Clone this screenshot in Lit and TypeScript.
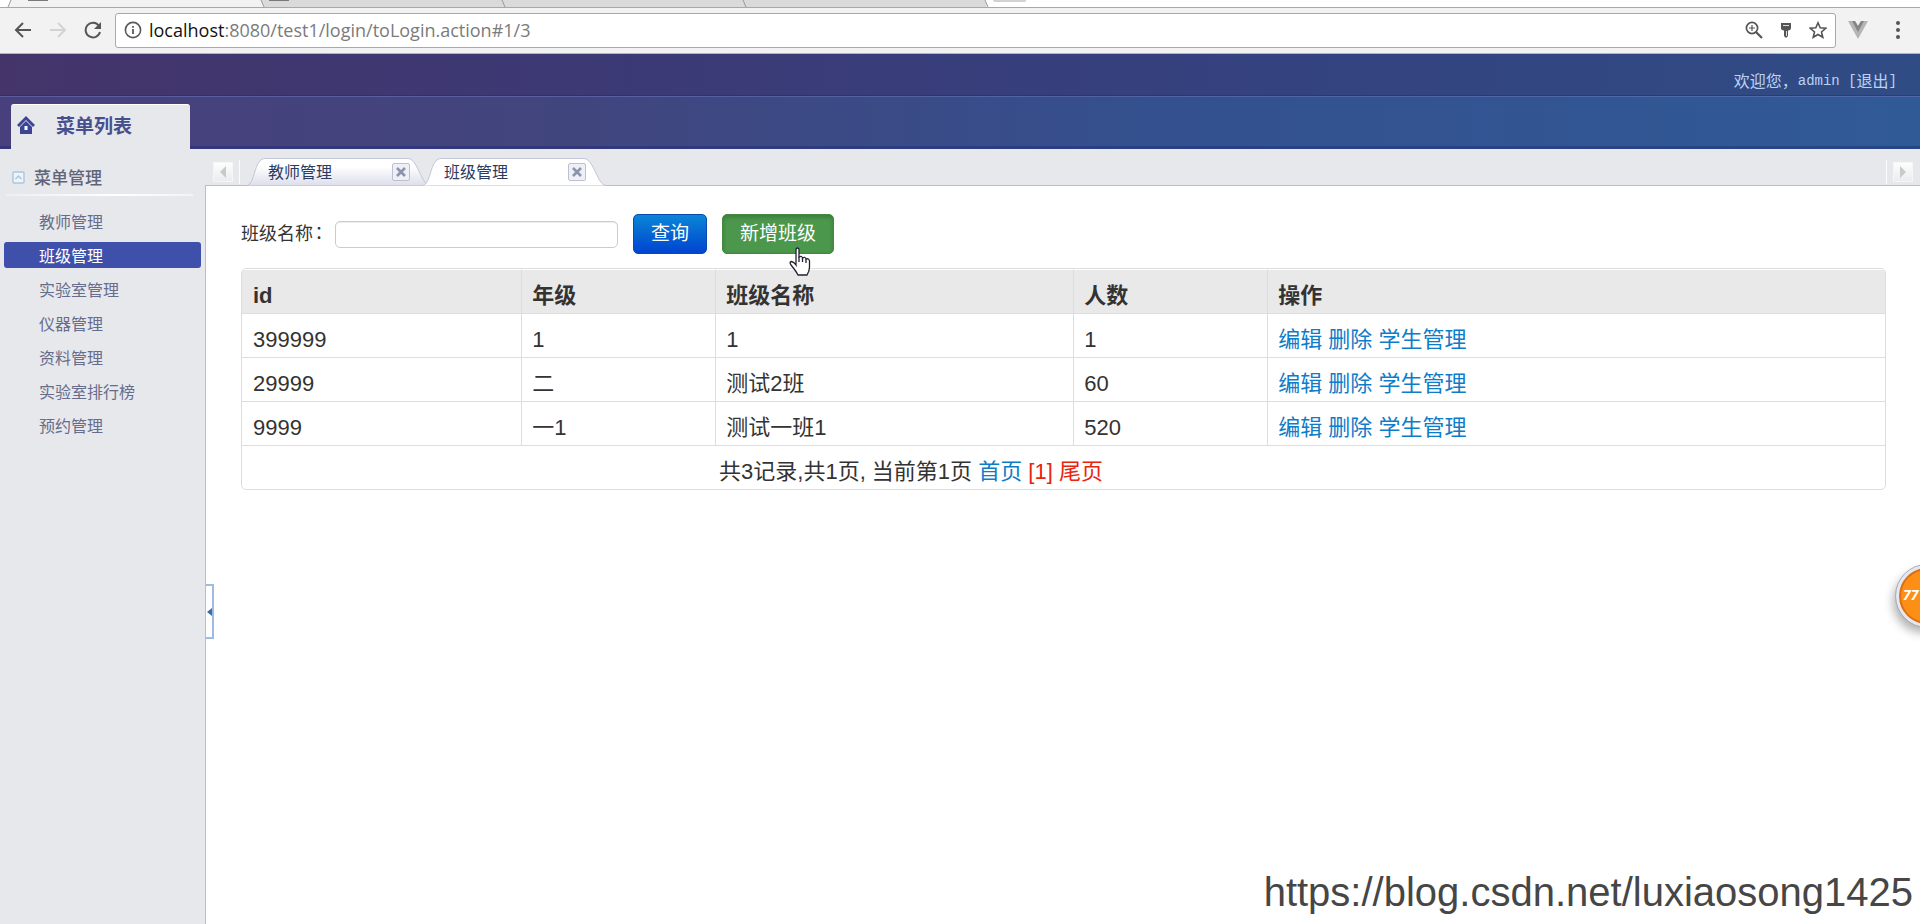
import { LitElement, html, css } from "lit";
import { customElement, state } from "lit/decorators.js";

interface ClassRow {
  id: string;
  grade: string;
  name: string;
  count: string;
}

const MENU = ["教师管理", "班级管理", "实验室管理", "仪器管理", "资料管理", "实验室排行榜", "预约管理"];
const TABS = ["教师管理", "班级管理"];
const ROWS: ClassRow[] = [
  { id: "399999", grade: "1", name: "1", count: "1" },
  { id: "29999", grade: "二", name: "测试2班", count: "60" },
  { id: "9999", grade: "一1", name: "测试一班1", count: "520" },
];

@customElement("browser-bar")
export class BrowserBar extends LitElement {
  static styles = css`
    :host { display: block; background: #f2f2f2; }
    .strip { display: block; width: 100%; height: 8px; background: #fff; border-bottom: 1px solid #a8a8a8; box-sizing: border-box; overflow: hidden; }
    .strip svg { display: block; }
    .bar { display: flex; align-items: center; height: 46px; padding: 0 20px 1px 14px; box-sizing: border-box; border-bottom: 1px solid #b5b5b7; }
    .nav { border: 0; background: none; padding: 0; width: 18px; height: 20px; margin-right: 17px; display: flex; align-items: center; justify-content: center; flex: none; }
    .address { flex: 1; height: 35px; box-sizing: border-box; background: #fff; border: 1px solid #a9a9ac; border-radius: 3px; display: flex; align-items: center; padding: 0 8px; min-width: 0; margin-left: -4px; }
    .url { flex: 1; margin-left: 7px; font: 18px/24px "Open Sans", "Noto Sans", sans-serif; color: #7b7b7b; white-space: nowrap; }
    .host { color: #111; }
    .tools { display: flex; gap: 14px; align-items: center; }
    .ext { display: flex; align-items: center; gap: 28px; margin-left: 12px; }
    svg { display: block; }
  `;
  render() {
    return html`
      <div class="strip">
        <svg width="1100" height="7" viewBox="0 0 1100 7">
          <path d="M11 0L8 7H264L261 0Z" fill="#f2f2f2" />
          <path d="M261 0L264 7H987L985 0Z" fill="#dadada" />
          <path d="M11 0L8 7M261 0L264 7M502 0L505 7M743 0L746 7M985 0L988 7" stroke="#999" fill="none" />
          <path d="M28 0H48M269 0H289" stroke="#77777c" stroke-width="2" />
          <path d="M993 0H1026V1Q1026 2 1024 2H995Q993 2 993 0Z" fill="#d2d2d2" />
        </svg>
      </div>
      <div class="bar">
        <button class="nav" aria-label="Back"><svg width="18" height="18" viewBox="0 0 18 18" fill="none" stroke="#555" stroke-width="2"><path d="M17 9H2M9 2L2 9L9 16" /></svg></button>
        <button class="nav" aria-label="Forward"><svg width="18" height="18" viewBox="0 0 18 18" fill="none" stroke="#d3d3d3" stroke-width="2"><path d="M1 9H16M9 2L16 9L9 16" /></svg></button>
        <button class="nav" aria-label="Reload"><svg width="18" height="18" viewBox="0 0 18 18" fill="none" stroke="#555" stroke-width="2"><path d="M15 5A7.3 7.3 0 1 0 16 11" /><path d="M17 1V8H10Z" fill="#555" stroke="none" /></svg></button>
        <div class="address">
          <svg width="18" height="18" viewBox="0 0 18 18"><circle cx="9" cy="9" r="7.6" fill="none" stroke="#5a5a5a" stroke-width="1.6" /><path d="M9 8V13M9 5V6.8" stroke="#5a5a5a" stroke-width="1.8" /></svg>
          <span class="url"><span class="host">localhost</span>:8080/test1/login/toLogin.action#1/3</span>
          <span class="tools">
            <svg width="18" height="18" viewBox="0 0 18 18" fill="none" stroke="#555"><circle cx="7" cy="7" r="5.6" stroke-width="1.7" /><path d="M11 11L17 17" stroke-width="2.2" /><path d="M4 7H10M7 4V10" stroke-width="1.2" /></svg>
            <svg width="18" height="18" viewBox="0 0 18 18"><path d="M4 2H14V7Q14 9 11 9.500V15L9 17L7 15V9.500Q4 9 4 7Z" fill="#555" /><path d="M6 4.500H12M9.500 10V15" stroke="#ddd" /></svg>
            <svg width="18" height="18" viewBox="0 0 18 18"><path d="M9 1.800L11.200 6.800L16.700 7.300L12.500 11L13.800 16.300L9 13.500L4.200 16.300L5.500 11L1.300 7.300L6.800 6.800Z" fill="none" stroke="#555" stroke-width="1.6" /></svg>
          </span>
        </div>
        <span class="ext">
          <svg width="20" height="18" viewBox="0 0 20 18"><path d="M0 0H7L10 5L13 0H20L10 18Z" fill="#b5b5b5" /><path d="M4 0H7L10 5L13 0H16L10 11Z" fill="#858585" /></svg>
          <svg width="4" height="18" viewBox="0 0 4 18" fill="#555"><circle cx="2" cy="2" r="2" /><circle cx="2" cy="9" r="2" /><circle cx="2" cy="16" r="2" /></svg>
        </span>
      </div>
    `;
  }
}

@customElement("side-menu")
export class SideMenu extends LitElement {
  @state() private active = 1;
  static styles = css`
    :host { display: block; width: 205px; flex: none; background: #e7e8ec; font-family: "Noto Sans CJK SC", sans-serif; }
    .group { display: flex; align-items: center; gap: 9px; height: 32px; margin: 12px 12px 0; font-size: 17px; line-height: 24px; color: #5f6478; font-weight: 500; }
    .rule { height: 2px; margin: 1px 12px 0 6px; background: linear-gradient(90deg, #eeeff3, #fff 60%, #f2f3f6); }
    .list { list-style: none; margin: 12px 4px 0; padding: 0; display: flex; flex-direction: column; gap: 8px; }
    .item { display: block; box-sizing: border-box; height: 26px; padding-left: 35px; font-size: 16px; line-height: 26px; color: #666c8a; text-decoration: none; border-radius: 3px; }
    .item.on { background: #3f50ab; color: #fff; }
  `;
  render() {
    return html`
      <div class="group">
        <svg width="13" height="13" viewBox="0 0 13 13" fill="none"><rect x="1" y="1" width="11" height="11" rx="1" fill="#eef4fa" stroke="#a9c6df" stroke-width="1.4" /><path d="M3.500 8L6.500 5L9.500 8" stroke="#a9c6df" stroke-width="1.500" /></svg>
        <span>菜单管理</span>
      </div>
      <div class="rule"></div>
      <ul class="list">
        ${MENU.map((m, i) => html`<li><a class="item ${i === this.active ? "on" : ""}" href="#" @click=${(e: Event) => { e.preventDefault(); this.active = i; }}>${m}</a></li>`)}
      </ul>
    `;
  }
}

@customElement("tab-strip")
export class TabStrip extends LitElement {
  @state() private active = 1;
  static styles = css`
    :host { display: flex; height: 37px; box-sizing: border-box; padding: 0 8px 0 9px; background: #e7e8ec; border-bottom: 1px solid #b9bccb; font-family: "Noto Sans CJK SC", sans-serif; }
    .scroll { border: 0; padding: 0; width: 18px; height: 18px; margin-top: 14px; background: linear-gradient(#fdfdfd, #ececee); box-shadow: 0 0 0 1px #f6f6f6; display: flex; align-items: center; justify-content: center; }
    .sep { width: 1px; margin: 11px 7px 1px; background: #fbfbfc; }
    .tabs { flex: 1; display: flex; align-items: flex-end; margin-bottom: -1px; }
    .tab { display: grid; width: 183px; height: 28px; margin-right: -7px; }
    .tab > * { grid-area: 1 / 1; }
    .face { display: flex; align-items: center; padding: 0 20px 0 21px; z-index: 1; }
    .name { flex: 1; border: 0; background: none; padding: 0 0 2px; text-align: left; font: 16px/24px "Noto Sans CJK SC", sans-serif; color: #2b3a63; }
    .x { border: 1px solid #bcc0d2; background: #eff0f5; border-radius: 2px; width: 18px; height: 18px; padding: 0; display: flex; align-items: center; justify-content: center; flex: none; }
  `;
  render() {
    const arrow = (d: string) => html`<svg width="8" height="12" viewBox="0 0 8 12"><path d=${d} fill="#c9c9cc" /></svg>`;
    return html`
      <button class="scroll" aria-label="Scroll left">${arrow("M7 0V12L1 6Z")}</button>
      <span class="sep"></span>
      <div class="tabs">
        ${TABS.map(
          (t, i) => html`<div class="tab">
            <svg width="183" height="28" viewBox="0 0 183 28">
              <defs><linearGradient id="g" x2="0" y2="1"><stop offset="0.3" stop-color="#fff" /><stop offset="1" stop-color="#dcdeea" /></linearGradient></defs>
              <path d="M0 27.500C8 26 7 2 17 0.500H161C171 1 174 27 183 27.500" fill=${i === this.active ? "#fff" : "url(#g)"} stroke="#c3c6d6" />
            </svg>
            <div class="face">
              <button class="name" @click=${() => (this.active = i)}>${t}</button>
              <button class="x" aria-label="Close"><svg width="10" height="10" viewBox="0 0 10 10"><path d="M1 1L9 9M9 1L1 9" stroke="#8c93ad" stroke-width="2.600" /></svg></button>
            </div>
          </div>`
        )}
      </div>
      <span class="sep"></span>
      <button class="scroll" aria-label="Scroll right">${arrow("M1 0V12L7 6Z")}</button>
    `;
  }
}

@customElement("class-panel")
export class ClassPanel extends LitElement {
  static styles = css`
    :host { display: block; padding: 28px 34px 0 35px; font-family: "Liberation Sans", "Noto Sans CJK SC", sans-serif; color: #333; }
    .form { display: flex; align-items: center; height: 40px; }
    .label { font-size: 18px; line-height: 24px; width: 94px; white-space: nowrap; margin-top: -2px; }
    .colon { font-family: "Noto Sans CJK TC", sans-serif; margin-left: -3px; }
    .text { width: 283px; height: 27px; box-sizing: border-box; border: 1px solid #ccc; border-radius: 5px; padding: 0 6px; font: 18px/24px "Liberation Sans", sans-serif; box-shadow: inset 0 1px 1px rgba(0, 0, 0, 0.075); outline: 0; }
    .btn { height: 40px; box-sizing: border-box; padding: 0 17px; border-radius: 5px; font: 19px/24px "Liberation Sans", "Noto Sans CJK SC", sans-serif; color: #fff; margin-left: 15px; }
    .search { border: 1px solid #0a4aae; background: linear-gradient(#0a86d6, #0044d0); }
    .add { border: 1px solid #43893f; background: #4b974b; box-shadow: inset 0 2px 4px rgba(0, 0, 0, 0.2); }
    .grid { width: 100%; margin-top: 14px; border: 1px solid #ddd; border-radius: 5px; border-spacing: 0; table-layout: fixed; font-size: 22px; line-height: 27px; overflow: hidden; }
    .grid th, .grid td { text-align: left; height: 44px; box-sizing: border-box; padding: 12px 10px 4px; border-top: 1px solid #ddd; border-left: 1px solid #ddd; white-space: nowrap; }
    .grid th { border-top-color: #fff; background: #e9e9e9; background-clip: padding-box; font-weight: 700; }
    .grid th:first-child, .grid td:first-child { border-left: 0; padding-left: 11px; }
    .c1 { width: 17%; } .c2 { width: 11.8%; } .c3 { width: 21.8%; } .c4 { width: 11.8%; }
    .link { color: #0e7cc8; text-decoration: none; }
    .red { color: #e8240f; text-decoration: none; }
    .grid td.pager { text-align: center; padding-right: 316px; }
  `;
  render() {
    return html`
      <form class="form" @submit=${(e: Event) => e.preventDefault()}>
        <label class="label" for="q">班级名称<span class="colon">：</span></label>
        <input class="text" id="q" type="text" />
        <button class="btn search">查询</button>
        <button class="btn add" type="button">新增班级</button>
      </form>
      <table class="grid">
        <colgroup><col class="c1" /><col class="c2" /><col class="c3" /><col class="c4" /><col /></colgroup>
        <thead><tr><th>id</th><th>年级</th><th>班级名称</th><th>人数</th><th>操作</th></tr></thead>
        <tbody>
          ${ROWS.map(
            (r) => html`<tr><td>${r.id}</td><td>${r.grade}</td><td>${r.name}</td><td>${r.count}</td>
              <td><a class="link" href="#">编辑</a> <a class="link" href="#">删除</a> <a class="link" href="#">学生管理</a></td></tr>`
          )}
          <tr><td class="pager" colspan="5">共3记录,共1页, 当前第1页 <a class="link" href="#">首页</a> <a class="red" href="#">[1]</a> <a class="red" href="#">尾页</a></td></tr>
        </tbody>
      </table>
    `;
  }
}

@customElement("app-root")
export class AppRoot extends LitElement {
  static styles = css`
    :host { display: flex; flex-direction: column; min-height: 100vh; position: relative; overflow: hidden; background: #fff; font-family: "Noto Sans CJK SC", sans-serif; }
    .head { background: linear-gradient(90deg, #44346a, #3b3a76 35%, #34427f 65%, #304c85); }
    .user { display: flex; justify-content: flex-end; align-items: center; height: 42px; padding: 10px 23px 0 0; box-sizing: border-box; font-size: 16px; line-height: 24px; color: #b9d3f5; }
    .mono { font-family: "Liberation Mono", monospace; font-size: 14px; white-space: pre; padding-top: 2px; }
    .out { color: inherit; text-decoration: none; }
    .nav { border-top: 1px solid rgba(110, 120, 190, 0.5); box-shadow: 0 -1px 0 rgba(30, 30, 80, 0.3), inset 0 -3px 0 rgba(24, 40, 120, 0.4); height: 53px; box-sizing: border-box; padding: 7px 11px 0; background: linear-gradient(90deg, #48407c, #41457e 30%, #34508e 60%, #305a96); display: flex; }
    .home { width: 179px; box-sizing: border-box; background: #e7e8ec; border-radius: 3px 3px 0 0; border-top: 1px solid #fff; display: flex; align-items: center; gap: 21px; padding: 0 6px; font: 700 19px/24px "Liberation Serif", "Noto Sans CJK SC", serif; color: #46508f; z-index: 1; }
    .house { margin-bottom: 4px; }
    .body { flex: 1; display: flex; }
    .main { flex: 1; min-width: 0; }
    .page { border-left: 1px solid #b9bccb; position: relative; min-height: calc(100vh - 186px); }
    .split { position: absolute; left: 0; top: 398px; width: 8px; height: 55px; box-sizing: border-box; padding: 0; border: 2px solid #9dbce0; border-left: 0; background: #fff; display: flex; align-items: center; justify-content: center; }
    .ball { position: absolute; right: -38px; top: 565px; width: 62px; height: 62px; box-sizing: border-box; border: 3px solid #e4e9f1; outline: 1px solid #a8adb6; border-radius: 50%; background: #fd8f17; box-shadow: -3px 6px 10px rgba(0, 0, 0, 0.3), inset 0 0 0 2px #e06d12; color: #fff; font: italic 700 14px/54px "Open Sans", sans-serif; padding-left: 4px; }
    .mark { position: absolute; right: 7px; bottom: 8px; font: 40px/48px "Liberation Sans", sans-serif; color: #464646; }
    .hand { position: absolute; left: 789px; top: 247px; }
  `;
  render() {
    return html`
      <browser-bar></browser-bar>
      <header class="head">
        <div class="user">欢迎您，<span class="mono">admin [</span><a class="out" href="#">退出</a><span class="mono">]</span></div>
        <div class="nav">
          <div class="home">
            <svg class="house" width="18" height="20" viewBox="0 0 18 20"><path d="M9 1L0 10L2 12L9 5L16 12L18 10Z" fill="#3c4496" /><path d="M9 6L3 12V19H15V12Z" fill="#3c4496" /><rect x="7.500" y="11" width="3" height="4" fill="#fff" /></svg>
            <span>菜单列表</span>
          </div>
        </div>
      </header>
      <div class="body">
        <side-menu></side-menu>
        <div class="main">
          <tab-strip></tab-strip>
          <div class="page">
            <class-panel></class-panel>
            <button class="split" aria-label="Collapse"><svg width="5" height="8" viewBox="0 0 5 8"><path d="M5 0V8L0 4Z" fill="#3d68ad" /></svg></button>
          </div>
        </div>
      </div>
      <svg class="hand" width="22" height="30" viewBox="0 0 22 30"><path d="M7 18V3Q7 1 8.500 1T10 3V10Q13 8.500 13.500 11Q16.500 9.500 17 12Q20 11 20.500 14V20Q20.500 24 18 28H9Q7 24 2 18Q0 15 2.500 14.500Q5 15 7 18Z" fill="#fff" stroke="#223" stroke-width="1.300" /><path d="M10 10V15M13.500 11V15M17 12V16" stroke="#223" stroke-width="1.300" /></svg>
      <div class="ball">77</div>
      <div class="mark">https://blog.csdn.net/luxiaosong1425</div>
    `;
  }
}
